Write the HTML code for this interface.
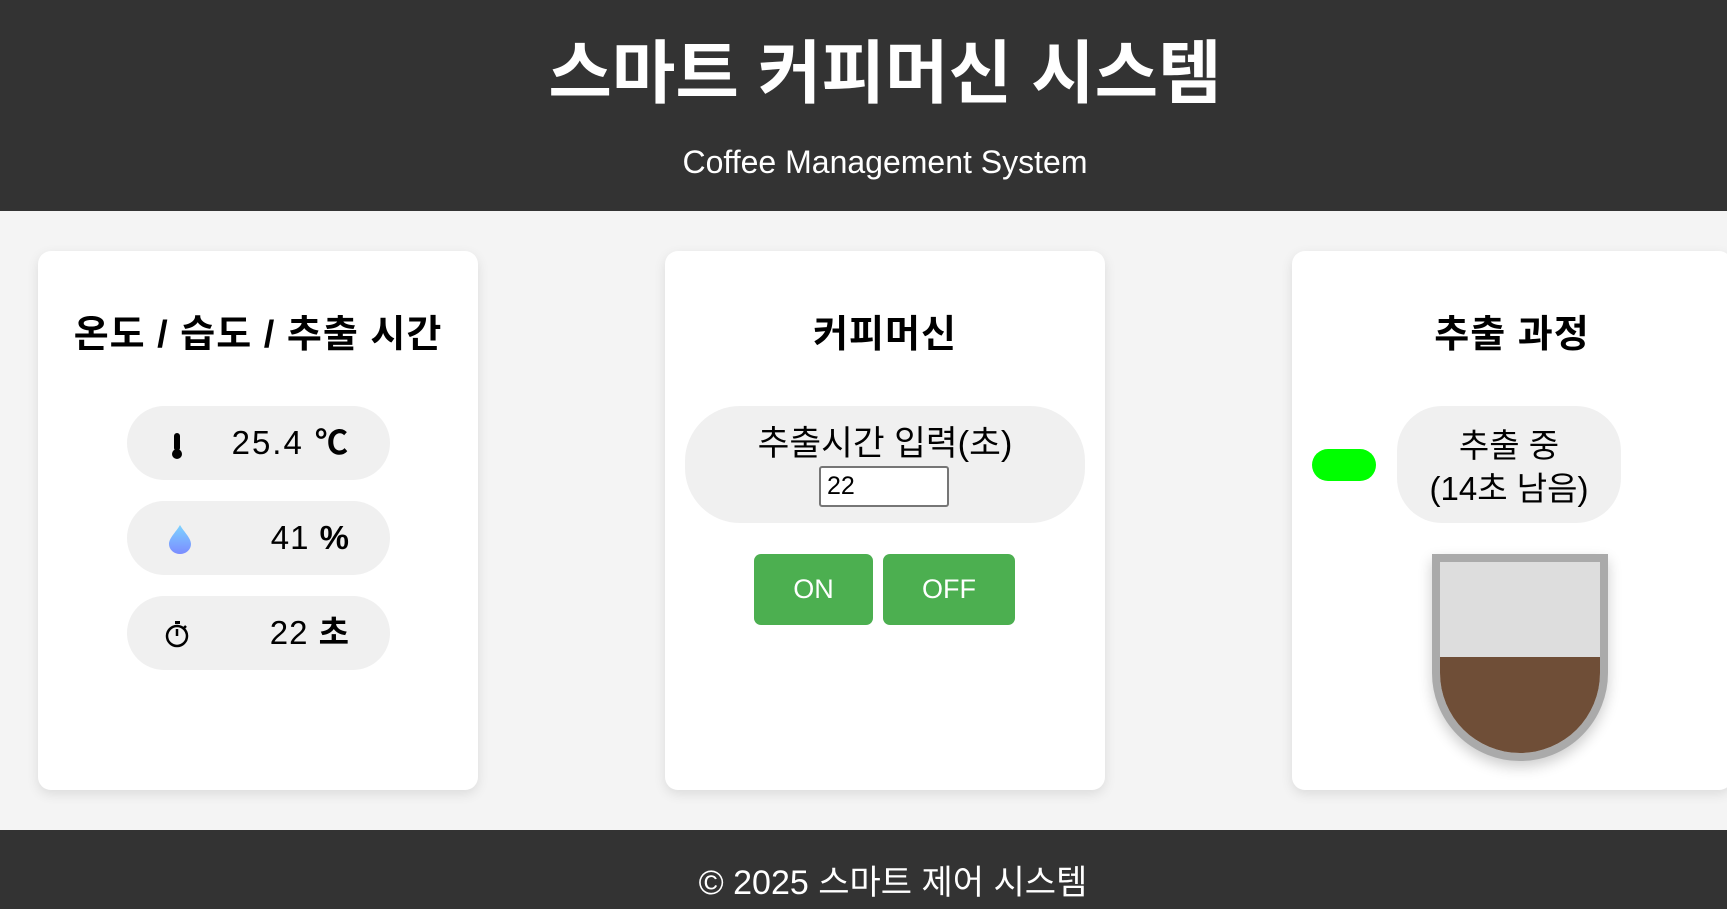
<!DOCTYPE html>
<html><head><meta charset="utf-8"><style>
*{box-sizing:border-box;margin:0;padding:0}
html{width:1727px;height:909px;overflow:hidden}
body{width:1727px;height:909px;overflow:hidden;background:#f4f4f4;font-family:"Liberation Sans","Noto Sans CJK KR",sans-serif;position:relative;color:#000}
.hd{position:absolute;left:0;top:0;width:1727px;height:211px;background:#333;color:#fff}
.ht{position:absolute;left:385px;width:1000px;text-align:center;white-space:nowrap}
.card{position:absolute;top:251px;width:440px;height:539px;background:#fff;border-radius:13px;box-shadow:0 4px 12px rgba(0,0,0,.1)}
.pill{position:absolute;background:#f0f0f0;border-radius:37px}
.t{position:absolute;font-size:33px;line-height:40px;white-space:nowrap}
.h2{top:313px;text-align:center;font-size:38px;line-height:44px;font-weight:bold;letter-spacing:1px}
.btn{position:absolute;top:554px;height:71px;background:#4caf50;color:#fff;border-radius:7px;font-size:27px;line-height:71px;text-align:center}
.ft{position:absolute;left:0;top:830px;width:1727px;height:79px;background:#333;overflow:hidden}
</style></head><body>
<div class="hd">
<div class="ht" style="top:34px;font-size:69px;line-height:80px;font-weight:bold">스마트 커피머신 시스템</div>
<div class="ht" style="top:143px;font-size:32px;line-height:38px">Coffee Management System</div>
</div>

<div class="card" style="left:38px"></div>
<div class="card" style="left:665px"></div>
<div class="card" style="left:1292px"></div>

<div class="t h2" style="left:38px;width:440px">온도 / 습도 / 추출 시간</div>
<div class="t h2" style="left:665px;width:440px">커피머신</div>
<div class="t h2" style="left:1292px;width:440px">추출 과정</div>

<div class="pill" style="left:127px;top:406px;width:263px;height:74px"></div>
<div class="pill" style="left:127px;top:501px;width:263px;height:74px"></div>
<div class="pill" style="left:127px;top:596px;width:263px;height:74px"></div>
<svg style="position:absolute;left:168px;top:432px" width="18" height="28" viewBox="0 0 18 28"><rect x="6" y="1" width="6" height="18" rx="3" fill="#000"/><circle cx="9" cy="22" r="5" fill="#000"/></svg>
<div class="t" style="left:200px;width:150px;top:423px;text-align:right;letter-spacing:2px">25.4 <b>℃</b></div>
<svg style="position:absolute;left:168px;top:524px" width="24" height="30" viewBox="0 0 24 30"><defs><linearGradient id="g" x1="0" y1="0" x2="0" y2="1"><stop offset="0" stop-color="#7dd3ff"/><stop offset="1" stop-color="#7b8cff"/></linearGradient></defs><path d="M12 1 C8 8 1 14 1 20 A11 10 0 0 0 23 20 C23 14 16 8 12 1Z" fill="url(#g)"/></svg>
<div class="t" style="left:200px;width:150px;top:518px;text-align:right;letter-spacing:1px">41 <b>%</b></div>
<svg style="position:absolute;left:164px;top:620px" width="28" height="28" viewBox="0 0 28 28"><rect x="11" y="1" width="5" height="3" fill="#000"/><circle cx="13" cy="16" r="10" fill="none" stroke="#000" stroke-width="2.5"/><path d="M13 9v7M22 6l-3 3" stroke="#000" stroke-width="2.5"/></svg>
<div class="t" style="left:200px;width:150px;top:613px;text-align:right;letter-spacing:1px">22 <b>초</b></div>

<div class="pill" style="left:685px;top:406px;width:400px;height:117px;border-radius:55px"></div>
<div class="t" style="left:685px;width:400px;top:424px;text-align:center;font-size:34.5px">추출시간 입력(초)</div>
<div style="position:absolute;left:819px;top:466px;width:130px;height:41px;background:#fff;border:2px solid #767676;border-radius:3px;font-size:25px;line-height:36px;padding-left:6px">22</div>
<div class="btn" style="left:754px;width:119px">ON</div>
<div class="btn" style="left:883px;width:132px">OFF</div>

<div style="position:absolute;left:1312px;top:449px;width:64px;height:32px;background:#00ff00;border-radius:16px"></div>
<div class="pill" style="left:1397px;top:406px;width:224px;height:117px;border-radius:45px"></div>
<div class="t" style="left:1397px;width:224px;top:424px;text-align:center;font-size:33px;line-height:43px">추출 중<br>(14초 남음)</div>
<div style="position:absolute;left:1432px;top:554px;width:176px;height:207px;border:8px solid #aaa;border-radius:0 0 88px 88px;background:#ddd;overflow:hidden;box-shadow:0 6px 14px rgba(0,0,0,.2)">
<div style="position:absolute;left:0;right:0;top:95px;bottom:0;background:#6f4e37"></div></div>

<div class="ft"><div style="position:absolute;left:393px;width:1000px;top:33px;text-align:center;color:#fff;font-size:34px;line-height:40px;white-space:nowrap">© 2025 스마트 제어 시스템</div></div>
</body></html>
